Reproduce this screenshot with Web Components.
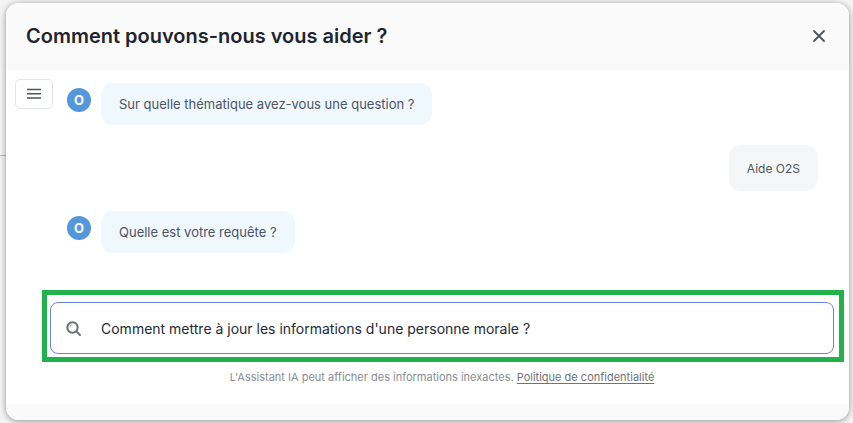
<!DOCTYPE html>
<html lang="fr">
<head>
<meta charset="utf-8">
<title>Assistant</title>
<style>
  html, body { margin: 0; height: 100%; overflow: hidden; background: #f4f4f5; }
  body { font-family: Inter, "Liberation Sans", sans-serif; }
</style>
</head>
<body>
<help-dialog>
  <span slot="title">Comment pouvons-nous vous aider ?</span>
  <chat-message from="bot" style="margin-top:13px">Sur quelle thématique avez-vous une question ?</chat-message>
  <chat-message from="user" style="margin-top:20px">Aide O2S</chat-message>
  <chat-message from="bot" style="margin-top:20px">Quelle est votre requête ?</chat-message>
  <search-box slot="search">Comment mettre à jour les informations d'une personne morale ?</search-box>
</help-dialog>

<script>
const dialogTpl = document.createElement('template');
dialogTpl.innerHTML = `
  <style>
    :host { display: block; height: 423px; padding: 3px 4px 3px 6px; box-sizing: border-box;
      background: linear-gradient(#b9bcc0, #b9bcc0) 0 155px / 6px 1px no-repeat, #f4f4f5; }
    .dialog { position: relative; height: 417px; background: #fff; border-radius: 13px; overflow: hidden;
      display: flex; flex-direction: column; }
    .frame { border-radius: 13px; box-shadow: 0 1px 6px rgba(0,0,0,.42); }
    header { height: 67px; flex: none; background: #fafafa; padding: 0 21px 1px 20px;
      display: flex; align-items: center; justify-content: space-between; box-sizing: border-box; }
    h1 { margin: 0; font: 600 20px/28px Inter, sans-serif; color: #1f2530; }
    .close { display: block; width: 18px; height: 18px; margin-bottom: 1px; }
    .menu { position: absolute; left: 9px; top: 76px; width: 38px; height: 30px; box-sizing: border-box;
      border: 1px solid #e3e4e6; border-radius: 5px; background: #fff; display: flex;
      align-items: center; justify-content: center; }
    .messages { flex: 1; padding: 0 31px 0 61px; display: flex; flex-direction: column; }
    .search { padding: 0 5px 0 36px; }
    .note { height: 42px; padding: 7px 7px 0 36px; box-sizing: border-box; text-align: center;
      font: 400 11px/16px Inter, sans-serif; color: #8a8d93; }
    .note a { color: #6f7278; text-decoration: underline; text-underline-offset: 2px; }
    footer { height: 16px; flex: none; background: #fafafa; }
  </style>
  <div class="frame">
  <div class="dialog">
    <header>
      <h1><slot name="title"></slot></h1>
      <svg class="close" viewBox="0 0 18 18" fill="none" stroke="#4b5565" stroke-width="1.8" stroke-linecap="round">
        <path d="M4 4l10 10M14 4l-10 10"/>
      </svg>
    </header>
    <div class="menu">
      <svg width="16" height="12" viewBox="0 0 16 12" stroke="#4b5565" stroke-width="1.6" fill="none">
        <path d="M1 1.5h14M1 5.8h14M1 10h14"/>
      </svg>
    </div>
    <div class="messages"><slot></slot></div>
    <div class="search"><slot name="search"></slot></div>
    <div class="note">L'Assistant IA peut afficher des informations inexactes. <a>Politique de confidentialité</a></div>
    <footer></footer>
  </div>
  </div>`;

class HelpDialog extends HTMLElement {
  constructor() {
    super();
    this.attachShadow({ mode: 'open' }).appendChild(dialogTpl.content.cloneNode(true));
  }
}

const messageTpl = document.createElement('template');
messageTpl.innerHTML = `
  <style>
    :host { display: flex; align-items: flex-start; gap: 10px; }
    :host([from="user"]) { justify-content: flex-end; }
    .avatar { width: 24px; height: 24px; margin-top: 5px; flex: none; border-radius: 50%; background: #5597dd;
      color: #fff; font: 700 13px/24px Inter, sans-serif; text-align: center; }
    :host([from="user"]) .avatar { display: none; }
    .bubble { padding: 13px 18px; border-radius: 12px; background: #eff7ff; color: #4d5562;
      font: 400 13px/16px Inter, sans-serif; }
    :host([from="user"]) .bubble { background: #f5f6f8; padding: 16px 18px 14px; font-size: 12px; }
  </style>
  <div class="avatar">O</div>
  <div class="bubble"><slot></slot></div>`;

class ChatMessage extends HTMLElement {
  constructor() {
    super();
    this.attachShadow({ mode: 'open' }).appendChild(messageTpl.content.cloneNode(true));
  }
}

const searchTpl = document.createElement('template');
searchTpl.innerHTML = `
  <style>
    :host { display: block; border: 5px solid #22b14c; padding: 7px 5px 3px 3px; }
    .field { height: 52px; box-sizing: border-box; border: 1px solid #6b83e0; border-radius: 8px; background: #fff;
      display: flex; align-items: center; padding-left: 14px; gap: 19px;
      font: 400 14px/20px Inter, sans-serif; color: #1f2937; }
    .field span { padding-top: 2px; }
    svg { flex: none; }
  </style>
  <div class="field">
    <svg width="17" height="17" viewBox="0 0 17 17" fill="none" stroke="#6b7078">
      <circle cx="7.5" cy="7.5" r="5.2" stroke-width="2"/>
      <path d="M11.6 11.6l3.4 3.4" stroke-width="1.9" stroke-linecap="round"/>
      <path d="M4.8 7.5a2.7 2.7 0 0 1 2.7-2.7" stroke-width="1" stroke="#a5a8ad"/>
    </svg>
    <span><slot></slot></span>
  </div>`;

class SearchBox extends HTMLElement {
  constructor() {
    super();
    this.attachShadow({ mode: 'open' }).appendChild(searchTpl.content.cloneNode(true));
  }
}

customElements.define('help-dialog', HelpDialog);
customElements.define('chat-message', ChatMessage);
customElements.define('search-box', SearchBox);
</script>
</body>
</html>
